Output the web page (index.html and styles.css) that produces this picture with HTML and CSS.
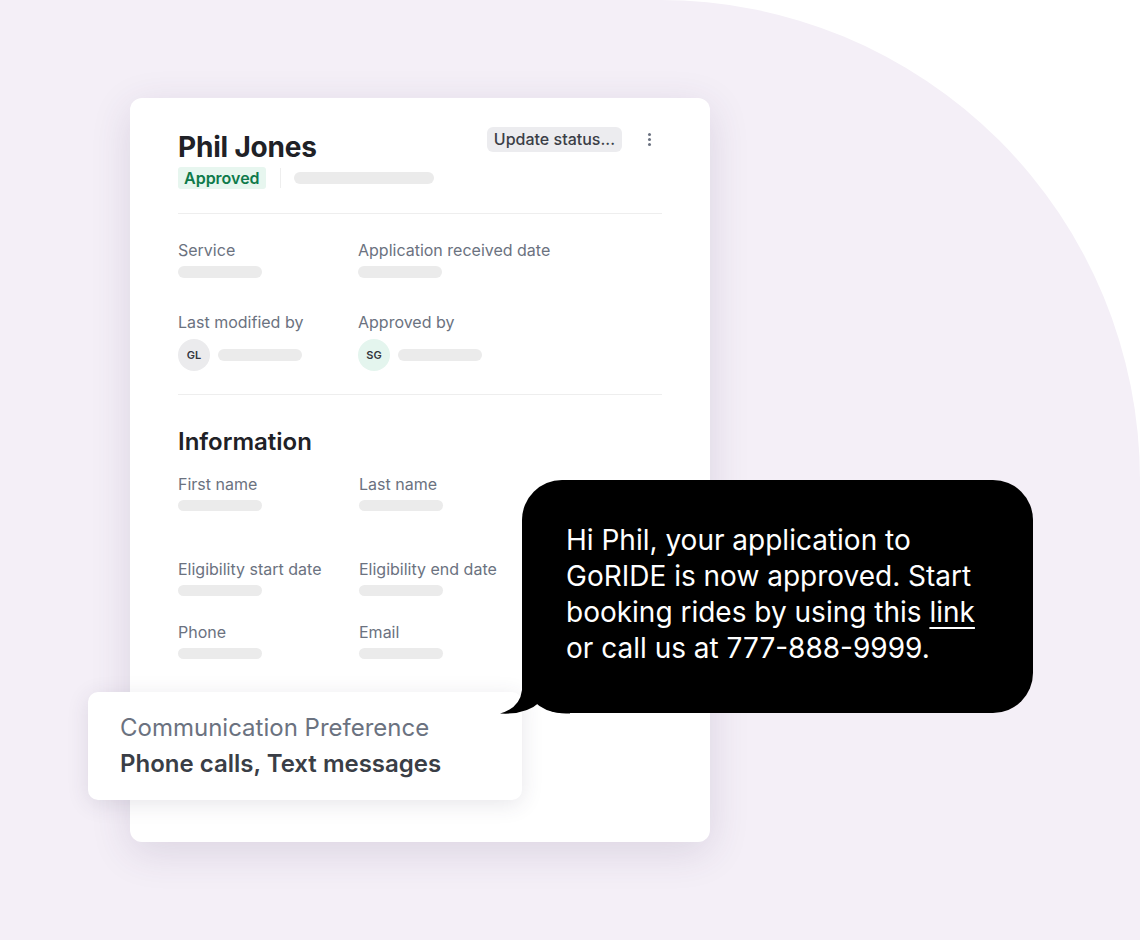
FILE: index.html
```html
<!DOCTYPE html>
<html lang="en">
<head>
<meta charset="utf-8">
<title>Phil Jones</title>
<link rel="stylesheet" href="styles.css">
</head>
<body>
<div class="stage">
  <div class="card">
    <div class="card-head">
      <div class="head-left">
        <h1 class="name">Phil Jones</h1>
        <div class="status-row">
          <span class="badge">Approved</span>
          <span class="vsep"></span>
          <span class="bar bar-long"></span>
        </div>
      </div>
      <div class="head-right">
        <span class="btn">Update status...</span>
        <span class="kebab"><i></i><i></i><i></i></span>
      </div>
    </div>
    <div class="divider d1"></div>
    <div class="fields f1">
      <div class="field">
        <div class="label">Service</div>
        <span class="bar"></span>
      </div>
      <div class="field">
        <div class="label">Application received date</div>
        <span class="bar"></span>
      </div>
    </div>
    <div class="fields f2">
      <div class="field">
        <div class="label">Last modified by</div>
        <div class="person"><span class="avatar gray">GL</span><span class="bar"></span></div>
      </div>
      <div class="field">
        <div class="label">Approved by</div>
        <div class="person"><span class="avatar green">SG</span><span class="bar"></span></div>
      </div>
    </div>
    <div class="divider d2"></div>
    <h2 class="section">Information</h2>
    <div class="fields f3 info">
      <div class="field">
        <div class="label">First name</div>
        <span class="bar"></span>
      </div>
      <div class="field">
        <div class="label">Last name</div>
        <span class="bar"></span>
      </div>
    </div>
    <div class="fields f4 info">
      <div class="field">
        <div class="label">Eligibility start date</div>
        <span class="bar"></span>
      </div>
      <div class="field">
        <div class="label">Eligibility end date</div>
        <span class="bar"></span>
      </div>
    </div>
    <div class="fields f5 info">
      <div class="field">
        <div class="label">Phone</div>
        <span class="bar"></span>
      </div>
      <div class="field">
        <div class="label">Email</div>
        <span class="bar"></span>
      </div>
    </div>
  </div>

  <div class="pref">
    <div class="pref-label">Communication Preference</div>
    <div class="pref-value">Phone calls, Text messages</div>
  </div>

  <div class="bubble">
    <svg class="tail" width="70" height="44" viewBox="0 0 70 44" aria-hidden="true">
      <path d="M22 0 L22 20 Q20 38 0 43.5 Q26 45 40 32 Q48 43.5 66 43.5 L70 43.5 L70 0 Z" fill="#000"/>
    </svg>
    <p class="msg">Hi Phil, your application to<br>GoRIDE is now approved. Start<br>booking rides by using this <u>link</u><br>or call us at 777-888-9999.</p>
  </div>
</div>
</body>
</html>
```
FILE: styles.css
```css
* { box-sizing: border-box; }
html, body { margin: 0; padding: 0; background: #ffffff; }
body { font-family: Inter, "Noto Sans", "Liberation Sans", sans-serif; }

.stage {
  position: relative;
  width: 1140px;
  height: 940px;
  background: #f4eff7;
  border-top-right-radius: 480px;
  padding-top: 98px;
  padding-left: 130px;
  overflow: hidden;
}

.card {
  width: 580px;
  height: 744px;
  background: #fff;
  border-radius: 12px;
  box-shadow: 0 10px 40px rgba(70, 50, 100, 0.14);
  padding: 32px 48px 0 48px;
}

.card-head { display: flex; justify-content: space-between; align-items: flex-start; }
.name {
  margin: 0;
  font-size: 28px;
  line-height: 34px;
  font-weight: 700;
  color: #202126;
  letter-spacing: -0.2px;
}
.status-row { display: flex; align-items: center; margin-top: 3px; }
.badge {
  display: inline-block;
  height: 22px;
  line-height: 22px;
  padding: 0 6px;
  background: #e7f6ef;
  color: #0e7a4b;
  font-size: 16px;
  font-weight: 600;
  border-radius: 3px;
}
.vsep { width: 1px; height: 20px; background: #eeeeee; margin: 0 13px 0 14px; }
.bar { display: block; width: 84px; height: 12px; border-radius: 6px; background: #ebebeb; }
.bar-long { width: 140px; }

.head-right { display: flex; align-items: center; margin-top: -3px; }
.btn {
  display: inline-block;
  height: 25px;
  line-height: 25px;
  padding: 0 7px;
  background: #ececef;
  border-radius: 6px;
  color: #3b3e46;
  font-size: 16px;
  font-weight: 500;
}
.kebab { display: flex; flex-direction: column; gap: 2px; margin-left: 26px; margin-right: 11px; }
.kebab i { display: block; width: 3px; height: 3px; border-radius: 50%; background: #6b7280; }

.divider { height: 1px; background: #eeeeee; }
.d1 { margin-top: 24px; }
.d2 { margin-top: 23px; }

.fields { display: grid; grid-template-columns: 180px 1fr; }
.f1 { margin-top: 26px; }
.f2 { margin-top: 34px; }
.label { font-size: 16px; line-height: 20px; color: #6b7280; }
.field .bar { margin-top: 6px; }
.person { display: flex; align-items: center; gap: 8px; margin-top: 7px; }
.person .bar { margin-top: 0; }
.avatar {
  width: 32px;
  height: 32px;
  border-radius: 50%;
  display: flex;
  align-items: center;
  justify-content: center;
  font-size: 11px;
  font-weight: 600;
  color: #33363d;
}
.avatar.gray { background: #ebebed; }
.avatar.green { background: #e4f5ee; }

.section {
  margin: 33px 0 0 0;
  font-size: 24px;
  line-height: 28px;
  font-weight: 600;
  color: #202126;
}
.info { grid-template-columns: 181px 1fr; }
.f3 { margin-top: 18px; }
.f4 { margin-top: 48px; }
.f5 { margin-top: 26px; }
.info .bar { margin-top: 6px; height: 11px; }

.pref {
  position: absolute;
  left: 88px;
  top: 692px;
  width: 434px;
  height: 108px;
  background: #fff;
  border-radius: 10px;
  box-shadow: 0 4px 22px rgba(60, 50, 80, 0.12);
  padding: 18px 32px;
}
.pref-label { font-size: 24px; line-height: 36px; color: #6b7280; }
.pref-value { font-size: 24px; line-height: 36px; font-weight: 600; color: #3a3e46; }

.bubble {
  position: absolute;
  left: 522px;
  top: 480px;
  width: 511px;
  height: 233px;
  background: #000;
  border-radius: 40px;
  padding: 42px 10px 0 44px;
}
.tail { position: absolute; left: -22px; top: 189.5px; display: block; }
.msg {
  position: relative;
  margin: 0;
  color: #fff;
  font-size: 28px;
  line-height: 36px;
  font-weight: 400;
  white-space: nowrap;
}
.msg u { text-decoration-thickness: 2px; text-underline-offset: 5px; }
```
